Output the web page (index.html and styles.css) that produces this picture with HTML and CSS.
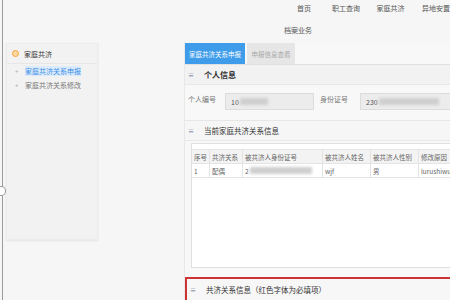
FILE: index.html
```html
<html>
    <head>
        <title>家庭共济</title>
        <link rel="stylesheet" href="styles.css">
    </head>
    <body>
        <div class="frame-line"></div>
        <div class="frame-knob"></div>
        <div class="topnav">
            <div class="nav-row">
                <span class="nav-a">首页</span>
                <span class="nav-b">职工查询</span>
                <span class="nav-c">家庭共济</span>
                <span class="nav-d">异地安置</span>
            </div>
            <div class="nav-row2">
                <span>档案业务</span>
            </div>
        </div>
        <div class="layout">
            <div class="sidebar">
                <div class="side-head">
                    <span class="side-dot"></span>
                    <span>家庭共济</span>
                </div>
                <div class="side-item active"><span class="plus">+</span><span class="lbl">家庭共济关系申报</span></div>
                <div class="side-item"><span class="plus">+</span><span class="lbl">家庭共济关系修改</span></div>
            </div>
            <div class="main">
                <div class="tabs">
                    <div class="tab on">家庭共济关系申报</div>
                    <div class="tab off">申报信息查看</div>
                </div>
                <div class="sec-head"><span class="ico">≡</span><span class="sec-title">个人信息</span></div>
                <div class="form-row">
                    <label class="f-label">个人编号</label>
                    <div class="f-input w1">10<span class="blur b1"></span></div>
                    <label class="f-label l2">身份证号</label>
                    <div class="f-input w2">230<span class="blur b2"></span></div>
                </div>
                <div class="sec-head sec2"><span class="ico">≡</span><span class="sec-title thin">当前家庭共济关系信息</span></div>
                <div class="tbl-box">
                    <table class="tbl">
                        <tr>
                            <th class="c1">序号</th>
                            <th class="c2">共济关系</th>
                            <th class="c3">被共济人身份证号</th>
                            <th class="c4">被共济人姓名</th>
                            <th class="c5">被共济人性别</th>
                            <th class="c6">修改原因</th>
                        </tr>
                        <tr>
                            <td>1</td>
                            <td>配偶</td>
                            <td>2<span class="blur b3"></span></td>
                            <td>wjf</td>
                            <td>男</td>
                            <td>lurushiwu</td>
                        </tr>
                    </table>
                </div>
                <div class="req-box"><span class="ico">≡</span><span class="sec-title thin">共济关系信息（红色字体为必填项）</span></div>
            </div>
        </div>
    </body>
</html>
```

FILE: styles.css
```css
html{
    background-color: #f6f6f6;
}
body{
    margin: 0;
    width: 450px;
    height: 300px;
    overflow: hidden;
    position: relative;
    font-family: "Noto Sans CJK SC", "Noto Sans", sans-serif;
    font-size: 7px;
    color: #555;
}
.frame-line{
    position: absolute;
    left: 2px;
    top: 0;
    width: 1px;
    height: 300px;
    background: #9a9a9a;
}
.frame-knob{
    position: absolute;
    left: -3px;
    top: 186px;
    width: 7px;
    height: 8px;
    border: 1px solid #999;
    border-radius: 50%;
    background: #fff;
}
.topnav{
    height: 43px;
    position: relative;
}
.nav-row{
    display: flex;
    padding-top: 1px;
    height: 14px;
    line-height: 14px;
    padding-left: 297px;
    white-space: nowrap;
}
.nav-a{ width: 36px; }
.nav-b{ width: 46px; }
.nav-c{ width: 47px; }
.nav-row2{
    padding-left: 284px;
    padding-top: 8px;
    line-height: 14px;
}
.layout{
    display: flex;
    align-items: flex-start;
}
.sidebar{
    flex-shrink: 0;
    margin-left: 6px;
    width: 92px;
    height: 197px;
    background: #f2f2f2;
    box-shadow: 0 1px 2px rgba(0,0,0,0.08);
    border: 1px solid #ececec;
    box-sizing: border-box;
}
.side-head{
    display: flex;
    align-items: center;
    height: 19px;
    padding-left: 5px;
    color: #333;
    border-bottom: 1px solid #e6e6e6;
}
.side-dot{
    width: 5px;
    height: 5px;
    border-radius: 50%;
    border: 1.5px solid #f5a53a;
    background: #ffd9a0;
    margin-right: 5px;
}
.side-item{
    display: flex;
    align-items: center;
    height: 14px;
    padding-left: 8px;
    color: #777;
    white-space: nowrap;
}
.side-item:first-of-type{
    margin-top: 1px;
}
.plus{
    color: #aaa;
    font-size: 6px;
    width: 10px;
}
.side-item.active .lbl{
    color: #3a8ee6;
    background: #dcebfb;
}
.main{
    margin-left: 86px;
    flex: 1;
    min-width: 0;
    height: 257px;
    border-left: 1px solid #e8e8e8;
    background: #f8f8f8;
}
.tabs{
    display: flex;
    gap: 2px;
    height: 21px;
    border-bottom: 1px solid #e0e0e0;
}
.tab{
    display: flex;
    align-items: center;
    justify-content: center;
    font-size: 6.5px;
    white-space: nowrap;
}
.tab.on{
    width: 60px;
    background: #3e9cea;
    color: #fff;
}
.tab.off{
    width: 48px;
    background: #e6e6e6;
    color: #a8a8a8;
}
.sec-head{
    display: flex;
    align-items: center;
    height: 19px;
    background: #f2f2f2;
    border-bottom: 1px solid #e8e8e8;
    padding-left: 3px;
}
.sec2{
    margin-top: 6px;
    border-top: 1px solid #e6e6e6;
    background: #f6f6f6;
}
.ico{
    color: #5a6d8c;
    font-size: 6px;
    width: 16px;
}
.sec-title{
    color: #333;
    font-size: 8px;
    font-weight: bold;
    white-space: nowrap;
}
.sec-title.thin{
    font-weight: normal;
    font-size: 7.5px;
}
.form-row{
    display: flex;
    align-items: center;
    height: 25px;
    padding-left: 3px;
    padding-top: 4px;
    white-space: nowrap;
}
.f-label{
    width: 37px;
    flex-shrink: 0;
    color: #777;
    margin-top: -6px;
}
.f-label.l2{
    margin-left: 6px;
    width: 40px;
}
.f-input{
    flex-shrink: 0;
    height: 17px;
    box-sizing: border-box;
    background: #ececec;
    border: 1px solid #dcdcdc;
    display: flex;
    align-items: center;
    padding-left: 5px;
    color: #555;
}
.w1{ width: 89px; }
.w2{ width: 100px; }
.blur{
    display: inline-block;
    height: 7px;
    background: #cfcfcf;
    filter: blur(1.5px);
    margin-left: 1px;
}
.b1{ width: 28px; }
.b2{ width: 60px; }
.b3{ width: 62px; }
.tbl-box{
    margin: 2px 0 9px 6px;
    height: 125px;
    background: #fff;
    border: 1px solid #e0e0e0;
    border-right: none;
    padding-top: 5px;
    box-sizing: border-box;
    overflow: hidden;
}
.tbl{
    border-collapse: collapse;
    table-layout: fixed;
    width: 287px;
    white-space: nowrap;
    font-size: 6.5px;
}
.tbl th, .tbl td{
    border: 1px solid #e4e4e4;
    height: 14px;
    padding: 0 2px;
    text-align: left;
    font-weight: normal;
    color: #666;
    overflow: hidden;
}
.tbl th{
    background: #f3f3f3;
}
.tbl tr td:first-child, .tbl tr th:first-child{
    border-left: none;
}
.c1{ width: 13px; }
.c2{ width: 28px; }
.c3{ width: 75px; }
.c4{ width: 43px; }
.c5{ width: 43px; }
.c6{ width: 55px; }
.req-box{
    display: flex;
    align-items: center;
    height: 21px;
    border: 2px solid #cc3434;
    border-right: none;
    padding-left: 3px;
    background: #f7f7f7;
}
```
